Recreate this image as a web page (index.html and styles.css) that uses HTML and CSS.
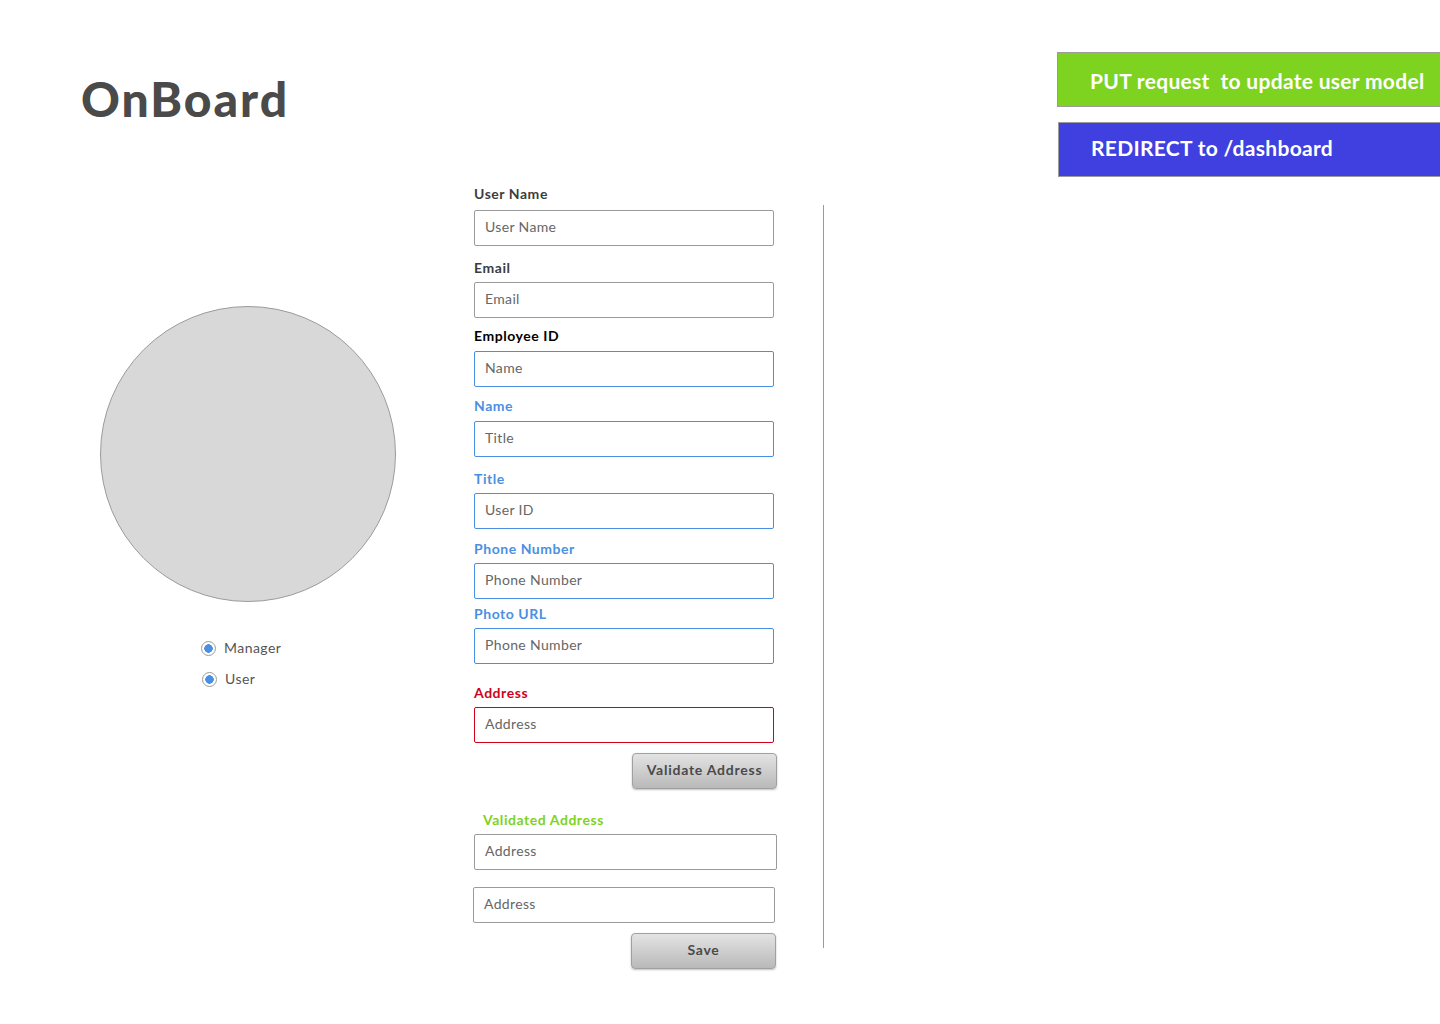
FILE: index.html
```html
<!DOCTYPE html>
<html lang="en">
<head>
<meta charset="utf-8">
<title>OnBoard</title>
<link rel="stylesheet" href="styles.css">
</head>
<body>
<div class="page">
  <div class="left">
    <h1 class="logo">OnBoard</h1>
    <div class="avatar"></div>
    <div class="roles">
      <label class="role"><span class="radio"></span>Manager</label>
      <label class="role role-user"><span class="radio"></span>User</label>
    </div>
  </div>

  <form class="form">
    <div class="field f-username">
      <div class="label">User Name</div>
      <div class="input">User Name</div>
    </div>
    <div class="field f-email">
      <div class="label">Email</div>
      <div class="input">Email</div>
    </div>
    <div class="field f-emp">
      <div class="label label-black">Employee ID</div>
      <div class="input input-blue">Name</div>
    </div>
    <div class="field f-name">
      <div class="label label-blue">Name</div>
      <div class="input input-blue">Title</div>
    </div>
    <div class="field f-title">
      <div class="label label-blue">Title</div>
      <div class="input input-blue">User ID</div>
    </div>
    <div class="field f-phone">
      <div class="label label-blue">Phone Number</div>
      <div class="input input-blue">Phone Number</div>
    </div>
    <div class="field f-photo">
      <div class="label label-blue">Photo URL</div>
      <div class="input input-blue">Phone Number</div>
    </div>
    <div class="field f-address">
      <div class="label label-red">Address</div>
      <div class="input input-red">Address</div>
    </div>
    <div class="btn-row">
      <button type="button" class="btn btn-validate">Validate Address</button>
    </div>
    <div class="field f-validated">
      <div class="label label-green">Validated Address</div>
      <div class="input input-wide">Address</div>
    </div>
    <div class="field f-address2">
      <div class="input input-alt">Address</div>
    </div>
    <div class="btn-row btn-row-save">
      <button type="button" class="btn btn-save">Save</button>
    </div>
  </form>

  <div class="divider"></div>

  <div class="actions">
    <div class="action action-green">PUT request&nbsp; to update user model</div>
    <div class="action action-blue">REDIRECT to /dashboard</div>
  </div>
</div>
</body>
</html>
```

FILE: styles.css
```css
* { box-sizing: border-box; }
html, body {
  margin: 0;
  padding: 0;
  background: #ffffff;
}
body {
  font-family: "Lato", "Noto Sans", sans-serif;
  color: #333;
  width: 1440px;
  height: 1024px;
  overflow: hidden;
}
.page {
  display: flex;
  align-items: flex-start;
}

/* Left column */
.left {
  width: 474px;
  padding-left: 81px;
  flex: none;
}
.logo {
  margin: 71px 0 0 0;
  font-size: 48px;
  line-height: 56px;
  font-weight: 900;
  color: #4a4a4a;
  letter-spacing: 2px;
}
.avatar {
  margin: 179px 0 0 19px;
  width: 296px;
  height: 296px;
  border-radius: 50%;
  background: #d8d8d8;
  border: 1px solid #9b9b9b;
}
.roles {
  margin: 37px 0 0 120px;
  display: flex;
  flex-direction: column;
  gap: 13px;
}
.role {
  display: flex;
  align-items: center;
  gap: 8px;
  font-size: 14px;
  line-height: 18px;
  color: #555;
  letter-spacing: 0.45px;
}
.role-user { padding-left: 1px; }
.radio {
  width: 15px;
  height: 15px;
  border-radius: 50%;
  border: 1px solid #9b9b9b;
  background: radial-gradient(circle, #4a90e2 0 4px, #ffffff 4.5px);
  box-shadow: inset 0 0 0 1px #fff;
  flex: none;
}

/* Form */
.form {
  width: 303px;
  flex: none;
  padding-top: 186px;
}
.field { display: flex; flex-direction: column; }
.label {
  font-size: 14px;
  line-height: 16px;
  font-weight: 700;
  color: #3d3d3d;
  margin-bottom: 6px;
  letter-spacing: 0.55px;
}
.label-black { color: #000; }
.label-blue { color: #4a90e2; }
.label-red { color: #d0021b; }
.label-green { color: #7ed321; margin-left: 9px; }
.input {
  width: 300px;
  height: 36px;
  border: 1px solid #9b9b9b;
  border-radius: 2px;
  padding: 0 0 3px 10px;
  display: flex;
  align-items: center;
  font-size: 14px;
  color: #666;
  background: #fff;
  letter-spacing: 0.35px;
}
.input-blue { border-color: #4a90e2; }
.input-red { border-color: #d0021b; }
.input-wide { width: 303px; }
.input-alt { width: 302px; margin-left: -1px; }

.f-username .label { margin-bottom: 8px; }
.f-email { margin-top: 14px; }
.f-emp { margin-top: 10px; }
.f-emp .label { margin-bottom: 7px; }
.f-name { margin-top: 11px; }
.f-name .label { margin-bottom: 7px; }
.f-title { margin-top: 14px; }
.f-phone { margin-top: 12px; }
.f-photo { margin-top: 7px; }
.f-address { margin-top: 21px; }
.f-validated { margin-top: 23px; }
.f-address2 { margin-top: 17px; }

.btn-row {
  display: flex;
  justify-content: flex-end;
  margin-top: 10px;
}
.btn-row-save { padding-right: 1px; }
.btn {
  width: 145px;
  height: 36px;
  border: 1px solid #a0a0a0;
  border-radius: 4px;
  background: linear-gradient(#e3e3e3, #b9b9b9);
  box-shadow: 0 1px 2px rgba(0,0,0,0.25);
  font-family: "Lato", "Noto Sans", sans-serif;
  font-size: 14px;
  font-weight: 700;
  color: #4a4a4a;
  padding: 0 0 4px 0;
  letter-spacing: 0.75px;
}

/* Divider */
.divider {
  flex: none;
  width: 1px;
  height: 743px;
  margin: 205px 0 0 46px;
  background: #9b9b9b;
}

/* Actions */
.actions {
  margin-left: auto;
  margin-top: 52px;
  width: 383px;
  flex: none;
  display: flex;
  flex-direction: column;
  gap: 15px;
}
.action {
  height: 55px;
  display: flex;
  align-items: center;
  padding-left: 32px;
  font-size: 21px;
  font-weight: 700;
  color: #fff;
  border: 1px solid #9b9b9b;
  border-right: none;
  white-space: nowrap;
  letter-spacing: 0.3px;
}
.action-green { background: #7ed321; padding-top: 1px; }
.action-blue { background: #4040e0; margin-left: 1px; padding-bottom: 4px; }
```
